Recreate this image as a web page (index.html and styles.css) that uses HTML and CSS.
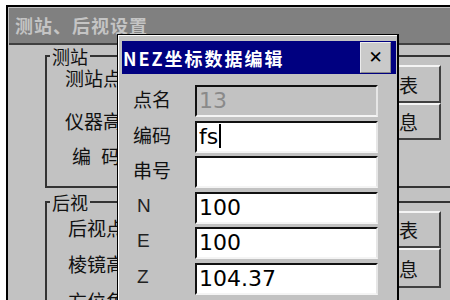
FILE: index.html
```html
<!DOCTYPE html>
<html lang="zh-CN">
<head>
    <meta charset="UTF-8">
    <title>测站、后视设置</title>
    <link rel="stylesheet" href="styles.css">
</head>
<body>
    <div class="window">
        <div class="window-title">测站、后视设置</div>

        <fieldset class="group group-station">
            <legend>测站</legend>
            <div class="group-body">
                <div class="labels">
                    <span class="lbl lbl-1">测站点</span>
                    <span class="lbl lbl-2">仪器高</span>
                    <span class="lbl lbl-3 spaced">编 码</span>
                </div>
                <div class="buttons">
                    <button class="btn btn-top">调表</button>
                    <button class="btn btn-bottom">信息</button>
                </div>
            </div>
        </fieldset>

        <fieldset class="group group-back">
            <legend>后视</legend>
            <div class="group-body">
                <div class="labels">
                    <span class="lbl lbl-1">后视点</span>
                    <span class="lbl lbl-2">棱镜高</span>
                    <span class="lbl lbl-3">方位角</span>
                </div>
                <div class="buttons">
                    <button class="btn btn-top">调表</button>
                    <button class="btn btn-bottom">信息</button>
                </div>
            </div>
        </fieldset>
    </div>

    <!-- modal editor on top of the settings window -->
    <div class="dialog">
        <div class="dialog-title">
            <span class="dialog-caption">NEZ坐标数据编辑</span>
            <button class="close">&#x2715;</button>
        </div>
        <div class="dialog-body">
            <div class="row">
                <span class="row-label">点名</span>
                <div class="field disabled">13</div>
            </div>
            <div class="row">
                <span class="row-label">编码</span>
                <div class="field">fs<span class="caret"></span></div>
            </div>
            <div class="row">
                <span class="row-label">串号</span>
                <div class="field"></div>
            </div>
            <div class="row">
                <span class="row-label latin">N</span>
                <div class="field">100</div>
            </div>
            <div class="row">
                <span class="row-label latin">E</span>
                <div class="field">100</div>
            </div>
            <div class="row">
                <span class="row-label latin">Z</span>
                <div class="field">104.37</div>
            </div>
        </div>
    </div>
</body>
</html>
```

FILE: styles.css
```css
body {
    margin: 0;
    width: 450px;
    height: 300px;
    overflow: hidden;
    position: relative;
    background: #ffffff;
    font-family: "Noto Sans CJK SC", sans-serif;
    color: #111;
}

/* Settings window behind */
.window {
    margin: 5px 0 0 6px;
    width: 444px;
    height: 295px;
    overflow: hidden;
    box-sizing: border-box;
    border-top: 2px solid #000;
    border-left: 2px solid #000;
    padding: 1px 0 0 1px;
    background: #c2c2c2;
}

.window-title {
    height: 35px;
    line-height: 35px;
    padding-left: 6px;
    background: #808080;
    color: #c4c4c4;
    font-size: 18px;
    font-weight: bold;
    letter-spacing: 1px;
    border-bottom: 2px solid #404040;
}

.group {
    margin: 2px 0 0 36px;
    width: 420px;
    box-sizing: border-box;
    border: 2px solid #333;
    padding: 0 22px 0 3px;
}

.group legend {
    padding: 0 2px;
    font-size: 18px;
    line-height: 18px;
}

.group-back {
    margin-top: 5px;
}

.group-body {
    display: grid;
    grid-template-columns: 1fr 110px;
    padding-left: 15px;
    height: 121px;
}

.group-back .group-body {
    padding-left: 18px;
    height: 120px;
}

.labels {
    display: flex;
    flex-direction: column;
}

.lbl {
    font-size: 19px;
    line-height: 22px;
}

.group-station .lbl-1 { margin-top: 2px; }
.group-station .lbl-2 { margin-top: 21px; }
.group-station .lbl-3 { margin-top: 13px; }

.group-back .lbl-1 { margin-top: 6px; }
.group-back .lbl-2 { margin-top: 14px; }
.group-back .lbl-3 { margin-top: 15px; }

.spaced {
    padding-left: 7px;
    word-spacing: 6px;
}

.buttons {
    display: flex;
    flex-direction: column;
}

.btn {
    display: flex;
    align-items: center;
    justify-content: flex-end;
    width: 110px;
    height: 38px;
    padding: 0 21px 0 0;
    border: 2px solid;
    border-color: #f4f4f4 #404040 #404040 #f4f4f4;
    background: #c2c2c2;
    font-family: "Noto Sans CJK SC", sans-serif;
    font-size: 19px;
    color: #111;
}

.btn-bottom {
    height: 37px;
}

.group-back .btn-top { height: 37px; }
.group-back .btn-bottom { height: 40px; }

/* NEZ dialog */
.dialog {
    position: absolute;
    left: 117px;
    top: 34px;
    width: 282px;
    height: 266px;
    overflow: hidden;
    box-sizing: border-box;
    border: 1px solid #000;
    border-right-width: 2px;
    border-bottom: 0;
    box-shadow: inset 1px 1px 0 #fff;
    padding: 6px 1px 0 4px;
    background: #c2c2c2;
}

.dialog-title {
    display: flex;
    align-items: center;
    height: 33px;
    padding-left: 1px;
    background: #000080;
    color: #fff;
    font-size: 18px;
    font-weight: bold;
    letter-spacing: 2px;
}

.close {
    margin: 0 5px 0 auto;
    width: 31px;
    height: 31px;
    padding: 0;
    border: 1px solid;
    border-color: #ececec #8a8a8a #8a8a8a #ececec;
    background: #cacaca;
    color: #000;
    font-family: "DejaVu Sans", sans-serif;
    font-size: 17px;
    line-height: 29px;
    letter-spacing: 0;
}

.dialog-body {
    display: flex;
    flex-direction: column;
    gap: 3.5px;
    padding: 11px 0 0 11px;
}

.row {
    display: flex;
    height: 32px;
}

.row-label {
    width: 62px;
    padding-top: 3px;
    font-size: 19px;
    line-height: 22px;
}

.row-label.latin {
    box-sizing: border-box;
    padding-left: 4px;
    font-family: "Liberation Sans", sans-serif;
    color: #222;
}

.field {
    width: 183px;
    box-sizing: border-box;
    border: 2px solid;
    border-color: #111 #e6e6e6 #f4f4f4 #111;
    padding-left: 2px;
    background: #fff;
    font-family: "DejaVu Sans", sans-serif;
    font-size: 22px;
    line-height: 28px;
    color: #000;
}

.field.disabled {
    background: #c2c2c2;
    color: #8a8a8a;
}

.caret {
    display: inline-block;
    width: 2px;
    height: 24px;
    margin-left: 1px;
    vertical-align: -4px;
    background: #000;
}
```
